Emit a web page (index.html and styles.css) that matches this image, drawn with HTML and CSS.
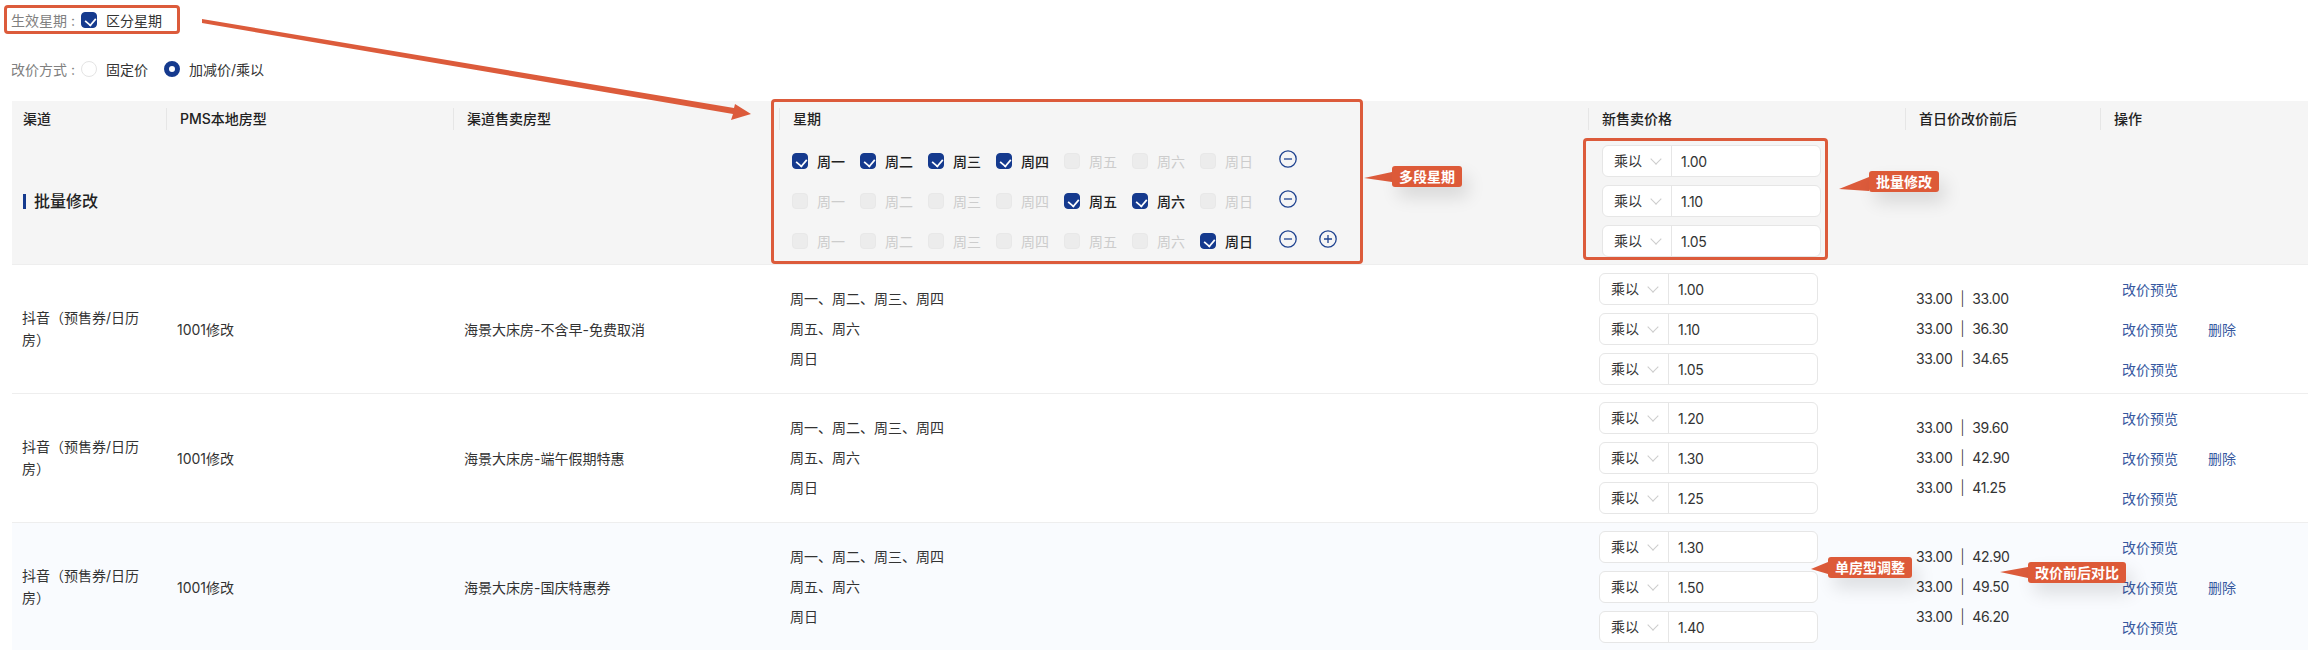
FILE: index.html
```html
<!DOCTYPE html>
<html lang="zh-CN">
<head>
    <meta charset="UTF-8">
    <title>批量改价</title>
    <link rel="stylesheet" href="styles.css">
</head>
<body>
    <div class="form-row first">
        <span class="form-label">生效星期 :</span>
        <span class="box on"></span>
        <span class="form-text">区分星期</span>
    </div>
    <div class="form-row second">
        <span class="form-label">改价方式 :</span>
        <span class="radio"></span>
        <span class="form-text gap-right">固定价</span>
        <span class="radio on"></span>
        <span class="form-text">加减价/乘以</span>
    </div>

    <div class="table">
        <div class="batch">
            <div class="row head">
                <div class="th">渠道</div>
                <div class="th line">PMS本地房型</div>
                <div class="th line">渠道售卖房型</div>
                <div class="th line">星期</div>
                <div class="th line">新售卖价格</div>
                <div class="th line">首日价改价前后</div>
                <div class="th line">操作</div>
            </div>
            <div class="row batch-body">
                <div class="batch-title">批量修改</div>
                <div></div>
                <div></div>
                <div class="day-rows">
                    <div class="day-row">
                        <span class="day"><span class="box on"></span>周一</span>
                        <span class="day"><span class="box on"></span>周二</span>
                        <span class="day"><span class="box on"></span>周三</span>
                        <span class="day"><span class="box on"></span>周四</span>
                        <span class="day off"><span class="box"></span>周五</span>
                        <span class="day off"><span class="box"></span>周六</span>
                        <span class="day off"><span class="box"></span>周日</span>
                        <svg class="round-btn" viewBox="0 0 18 18"><circle cx="9" cy="9" r="8.2"/><path d="M5 9h8"/></svg>
                    </div>
                    <div class="day-row">
                        <span class="day off"><span class="box"></span>周一</span>
                        <span class="day off"><span class="box"></span>周二</span>
                        <span class="day off"><span class="box"></span>周三</span>
                        <span class="day off"><span class="box"></span>周四</span>
                        <span class="day"><span class="box on"></span>周五</span>
                        <span class="day"><span class="box on"></span>周六</span>
                        <span class="day off"><span class="box"></span>周日</span>
                        <svg class="round-btn" viewBox="0 0 18 18"><circle cx="9" cy="9" r="8.2"/><path d="M5 9h8"/></svg>
                    </div>
                    <div class="day-row">
                        <span class="day off"><span class="box"></span>周一</span>
                        <span class="day off"><span class="box"></span>周二</span>
                        <span class="day off"><span class="box"></span>周三</span>
                        <span class="day off"><span class="box"></span>周四</span>
                        <span class="day off"><span class="box"></span>周五</span>
                        <span class="day off"><span class="box"></span>周六</span>
                        <span class="day"><span class="box on"></span>周日</span>
                        <svg class="round-btn" viewBox="0 0 18 18"><circle cx="9" cy="9" r="8.2"/><path d="M5 9h8"/></svg>
                        <svg class="round-btn" viewBox="0 0 18 18"><circle cx="9" cy="9" r="8.2"/><path d="M5 9h8M9 5v8"/></svg>
                    </div>
                </div>
                <div class="price-inputs">
                    <div class="price-input"><span class="select">乘以</span><span class="value">1.00</span></div>
                    <div class="price-input"><span class="select">乘以</span><span class="value">1.10</span></div>
                    <div class="price-input"><span class="select">乘以</span><span class="value">1.05</span></div>
                </div>
            </div>
        </div>

        <div class="row item">
            <div class="channel">抖音（预售券/日历房）</div>
            <div class="td">1001修改</div>
            <div class="td">海景大床房-不含早-免费取消</div>
            <div class="td stack">
                <div>周一、周二、周三、周四</div>
                <div>周五、周六</div>
                <div>周日</div>
            </div>
            <div class="price-inputs">
                <div class="price-input"><span class="select">乘以</span><span class="value">1.00</span></div>
                <div class="price-input"><span class="select">乘以</span><span class="value">1.10</span></div>
                <div class="price-input"><span class="select">乘以</span><span class="value">1.05</span></div>
            </div>
            <div class="td stack compare">
                <div>33.00<i>|</i>33.00</div>
                <div>33.00<i>|</i>36.30</div>
                <div>33.00<i>|</i>34.65</div>
            </div>
            <div class="ops">
                <div class="op-line"><a>改价预览</a></div>
                <div class="op-line"><a>改价预览</a><a>删除</a></div>
                <div class="op-line"><a>改价预览</a></div>
            </div>
        </div>

        <div class="row item">
            <div class="channel">抖音（预售券/日历房）</div>
            <div class="td">1001修改</div>
            <div class="td">海景大床房-端午假期特惠</div>
            <div class="td stack">
                <div>周一、周二、周三、周四</div>
                <div>周五、周六</div>
                <div>周日</div>
            </div>
            <div class="price-inputs">
                <div class="price-input"><span class="select">乘以</span><span class="value">1.20</span></div>
                <div class="price-input"><span class="select">乘以</span><span class="value">1.30</span></div>
                <div class="price-input"><span class="select">乘以</span><span class="value">1.25</span></div>
            </div>
            <div class="td stack compare">
                <div>33.00<i>|</i>39.60</div>
                <div>33.00<i>|</i>42.90</div>
                <div>33.00<i>|</i>41.25</div>
            </div>
            <div class="ops">
                <div class="op-line"><a>改价预览</a></div>
                <div class="op-line"><a>改价预览</a><a>删除</a></div>
                <div class="op-line"><a>改价预览</a></div>
            </div>
        </div>

        <div class="row item hover">
            <div class="channel">抖音（预售券/日历房）</div>
            <div class="td">1001修改</div>
            <div class="td">海景大床房-国庆特惠券</div>
            <div class="td stack">
                <div>周一、周二、周三、周四</div>
                <div>周五、周六</div>
                <div>周日</div>
            </div>
            <div class="price-inputs">
                <div class="price-input"><span class="select">乘以</span><span class="value">1.30</span></div>
                <div class="price-input"><span class="select">乘以</span><span class="value">1.50</span></div>
                <div class="price-input"><span class="select">乘以</span><span class="value">1.40</span></div>
            </div>
            <div class="td stack compare">
                <div>33.00<i>|</i>42.90</div>
                <div>33.00<i>|</i>49.50</div>
                <div>33.00<i>|</i>46.20</div>
            </div>
            <div class="ops">
                <div class="op-line"><a>改价预览</a></div>
                <div class="op-line"><a>改价预览</a><a>删除</a></div>
                <div class="op-line"><a>改价预览</a></div>
            </div>
        </div>
    </div>

    <!-- Red notes drawn on top of the screenshot -->
    <div class="mark mark-switch"></div>
    <div class="mark mark-days"></div>
    <div class="mark mark-prices"></div>

    <svg class="arrows" viewBox="0 0 2308 650">
        <polygon points="202,19 734,108 735,104 751,114 731,120 733,114 202,23"/>
        <polygon points="1392,172 1364,178 1392,182"/>
        <polygon points="1869,177 1839,189 1869,191"/>
        <polygon points="1828,562 1811,569 1828,574"/>
        <polygon points="2028,567 2000,572 2028,578"/>
    </svg>

    <div class="note note-days">多段星期</div>
    <div class="note note-batch">批量修改</div>
    <div class="note note-single">单房型调整</div>
    <div class="note note-compare">改价前后对比</div>
</body>
</html>
```

FILE: styles.css
```css
* {
    margin: 0;
    padding: 0;
    box-sizing: border-box;
}

html, body {
    width: 2308px;
    height: 650px;
    overflow: hidden;
}

body {
    position: relative;
    background-color: #fff;
    color: #333;
    font-family: Inter, "Noto Sans CJK SC", sans-serif;
    font-size: 14px;
}

/* Top form */
.form-row {
    display: flex;
    align-items: center;
    height: 24px;
    padding-left: 11px;
}

.form-row.first {
    margin-top: 8px;
}

.form-row.second {
    margin-top: 25px;
}

.form-label {
    width: 70px;
    color: #808080;
    white-space: nowrap;
}

.form-text {
    margin-left: 9px;
}

.gap-right {
    margin-right: 16px;
}

.box {
    position: relative;
    display: inline-block;
    flex: none;
    width: 16px;
    height: 16px;
    border: 1px solid #e8e8e8;
    border-radius: 4px;
    background-color: #ececec;
}

.box.on {
    border-color: #153a8e;
    background-color: #153a8e;
}

.box.on::after {
    content: "";
    position: absolute;
    left: 3.5px;
    top: 1.5px;
    width: 7px;
    height: 9px;
    border-right: 2px solid #fff;
    border-bottom: 2px solid #fff;
    transform: rotate(40deg) scale(0.85);
}

.radio {
    flex: none;
    width: 16px;
    height: 16px;
    border: 1px solid #e4e4e4;
    border-radius: 50%;
}

.radio.on {
    border: 5px solid #153a8e;
}

/* Table */
.table {
    margin-top: 20px;
    margin-left: 12px;
}

.row {
    display: grid;
    grid-template-columns: 154px 287px 326px 809px 317px 195px 208px;
}

.batch {
    height: 164px;
    background-color: #f5f5f5;
    border-bottom: 1px solid #eee;
}

.head {
    height: 37px;
    padding-top: 7px;
    font-weight: 500;
    color: #222;
}

.th {
    height: 22px;
    line-height: 22px;
    padding-left: 14px;
}

.th:first-child {
    padding-left: 11px;
}

.th.line {
    border-left: 1px solid #e6e6e6;
    padding-left: 13px;
}

.batch-body {
    padding-top: 7px;
}

.batch-title {
    grid-column: 1;
    align-self: center;
    margin-left: 11px;
    padding-left: 8px;
    height: 15px;
    line-height: 15px;
    border-left: 3px solid #153a8e;
    font-size: 16px;
    font-weight: 500;
    color: #222;
    white-space: nowrap;
}

.day-rows {
    display: flex;
    flex-direction: column;
    gap: 8px;
    padding-left: 13px;
}

.day-row {
    display: flex;
    align-items: center;
    height: 32px;
}

.day {
    display: flex;
    align-items: center;
    gap: 9px;
    width: 68px;
    font-weight: 500;
    color: #222;
}

.day.off {
    color: #ccc;
    font-weight: 400;
}

.round-btn {
    width: 18px;
    height: 18px;
    margin: 0 22px 4px 11px;
    fill: none;
    stroke: #1f4390;
    stroke-width: 1.3;
}

.round-btn + .round-btn {
    margin-left: 0;
}

.price-inputs {
    display: flex;
    flex-direction: column;
    gap: 8px;
    padding-left: 11px;
}

.batch-body .price-inputs {
    padding-left: 14px;
}

.price-input {
    display: flex;
    align-items: center;
    width: 219px;
    height: 32px;
    border: 1px solid #e6e6e6;
    border-radius: 6px;
    background-color: #fff;
}

.select {
    position: relative;
    width: 69px;
    height: 100%;
    line-height: 30px;
    padding-left: 11px;
    border-right: 1px solid #e6e6e6;
}

.select::after {
    content: "";
    position: absolute;
    right: 11px;
    top: 9px;
    width: 7px;
    height: 7px;
    border-right: 1px solid #ccc;
    border-bottom: 1px solid #ccc;
    transform: rotate(45deg);
}

.value {
    padding-left: 9px;
    letter-spacing: -0.3px;
}

.item {
    height: 129px;
    padding: 8px 0;
    border-bottom: 1px solid #eee;
    align-items: center;
}

.item.hover {
    background-color: #f9fbfe;
}

.channel {
    padding: 0 20px 0 10px;
    line-height: 22px;
}

.td {
    padding-left: 11px;
}

.stack {
    line-height: 30px;
}

.compare {
    letter-spacing: -0.4px;
}

.compare i {
    margin: 0 8px;
    font-style: normal;
    font-weight: 300;
}

.ops {
    display: flex;
    flex-direction: column;
    gap: 8px;
    padding-left: 22px;
}

.op-line {
    display: flex;
    align-items: center;
    gap: 30px;
    height: 32px;
    color: #36589f;
}

/* Annotations */
.mark {
    position: absolute;
    border: 3px solid #dc5b3b;
    border-radius: 4px;
}

.mark-switch {
    left: 4px;
    top: 5px;
    width: 176px;
    height: 29px;
}

.mark-days {
    left: 771px;
    top: 99px;
    width: 592px;
    height: 165px;
}

.mark-prices {
    left: 1583px;
    top: 138px;
    width: 245px;
    height: 122px;
}

.arrows {
    position: absolute;
    left: 0;
    top: 0;
    width: 2308px;
    height: 650px;
    fill: #dc5b3b;
}

.note {
    position: absolute;
    height: 21px;
    line-height: 21px;
    padding: 0 7px;
    border-radius: 3px;
    background-color: #dd5a38;
    color: #fff;
    font-size: 14px;
    font-weight: 700;
    white-space: nowrap;
    box-shadow: 6px 10px 18px rgba(0, 0, 0, 0.12);
}

.note-days {
    left: 1392px;
    top: 166px;
}

.note-batch {
    left: 1869px;
    top: 171px;
}

.note-single {
    left: 1828px;
    top: 557px;
}

.note-compare {
    left: 2028px;
    top: 562px;
}
```
